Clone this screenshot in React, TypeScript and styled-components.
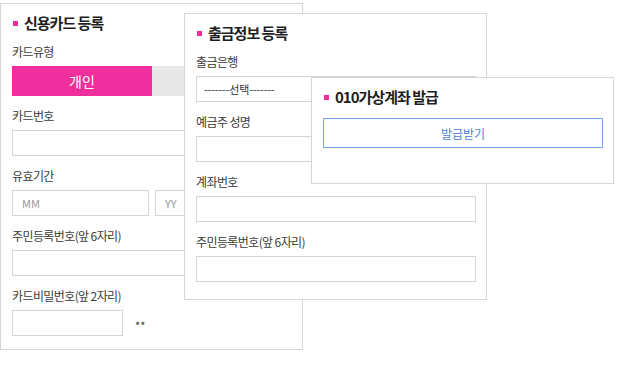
import styled, { createGlobalStyle } from "styled-components";

const GlobalStyle = createGlobalStyle`
    html, body {
        margin: 0;
        padding: 0;
        background: #ffffff;
    }
    body {
        font-family: "Noto Sans CJK KR", "Noto Sans", sans-serif;
        color: #333;
    }
`;

function App() {
    return (
        <Wrapper>
            <GlobalStyle />
            <Card $left={0} $top={3} $height={347}>
                <Title>신용카드 등록</Title>
                <Label>카드유형</Label>
                <Segment>
                    <SegButton $active>개인</SegButton>
                    <SegButton />
                </Segment>
                <Label>카드번호</Label>
                <Input />
                <Label>유효기간</Label>
                <Row>
                    <Input $width={137} placeholder="MM" />
                    <Input $width={137} placeholder="YY" />
                </Row>
                <Label>주민등록번호(앞 6자리)</Label>
                <Input />
                <Label>카드비밀번호(앞 2자리)</Label>
                <Row>
                    <Input $width={111} />
                    <Stars>**</Stars>
                </Row>
            </Card>
            <Card $left={184} $top={13} $height={287}>
                <Title>출금정보 등록</Title>
                <Label>출금은행</Label>
                <Select>-------선택-------</Select>
                <Label>예금주 성명</Label>
                <Input />
                <Label>계좌번호</Label>
                <Input />
                <Label>주민등록번호(앞 6자리)</Label>
                <Input />
            </Card>
            <Card $left={311} $top={77} $height={107}>
                <Title>010가상계좌 발급</Title>
                <IssueButton>발급받기</IssueButton>
            </Card>
        </Wrapper>
    );
}

const Wrapper = styled.div`
    position: relative;
    width: 619px;
    height: 373px;
    overflow: hidden;
    background: #fff;
`;
const Card = styled.div<{ $left: number; $top: number; $height: number }>`
    position: absolute;
    left: ${(p) => p.$left}px;
    top: ${(p) => p.$top}px;
    width: 303px;
    height: ${(p) => p.$height}px;
    box-sizing: border-box;
    padding: 8px 10px 0 11px;
    background: #fff;
    border: 1px solid #d6d6d6;
    display: flex;
    flex-direction: column;
`;
const Title = styled.h2`
    margin: 0;
    display: flex;
    align-items: center;
    gap: 6px;
    height: 20px;
    font-size: 15px;
    font-weight: 700;
    color: #1e1e1e;
    letter-spacing: -1px;
    &::before {
        content: "";
        width: 5px;
        height: 5px;
        margin: 2px 0 0 1px;
        background: #ee2d9b;
    }
`;
const Label = styled.div`
    margin: 11px 0 5px;
    height: 18px;
    line-height: 18px;
    font-size: 12px;
    color: #3a3a3a;
    letter-spacing: -0.6px;
`;
const Segment = styled.div`
    display: flex;
    height: 30px;
`;
const SegButton = styled.div<{ $active?: boolean }>`
    width: 140px;
    display: flex;
    align-items: center;
    justify-content: center;
    font-size: 14px;
    color: ${(p) => (p.$active ? "#fff" : "#666")};
    background: ${(p) => (p.$active ? "#f02f9e" : "#e8e8e8")};
`;
const Row = styled.div`
    display: flex;
    align-items: center;
    gap: 6px;
`;
const Input = styled.input<{ $width?: number }>`
    box-sizing: border-box;
    width: ${(p) => (p.$width ? `${p.$width}px` : "100%")};
    height: 26px;
    margin: 0;
    padding: 0 9px;
    border: 1px solid #d4d4d4;
    background: #fff;
    font-family: inherit;
    font-size: 11px;
    outline: none;
    &::placeholder {
        color: #999;
    }
`;
const Select = styled.div`
    box-sizing: border-box;
    height: 26px;
    display: flex;
    align-items: center;
    padding: 0 7px;
    border: 1px solid #d4d4d4;
    font-size: 11px;
    color: #333;
    letter-spacing: -0.2px;
`;
const Stars = styled.span`
    margin: 4px 0 0 6px;
    font-size: 11px;
    color: #333;
`;
const IssueButton = styled.div`
    box-sizing: border-box;
    margin-top: 12px;
    height: 30px;
    display: flex;
    align-items: center;
    justify-content: center;
    border: 1px solid #79a6e6;
    font-size: 12px;
    color: #4a84d6;
`;

export default App;
